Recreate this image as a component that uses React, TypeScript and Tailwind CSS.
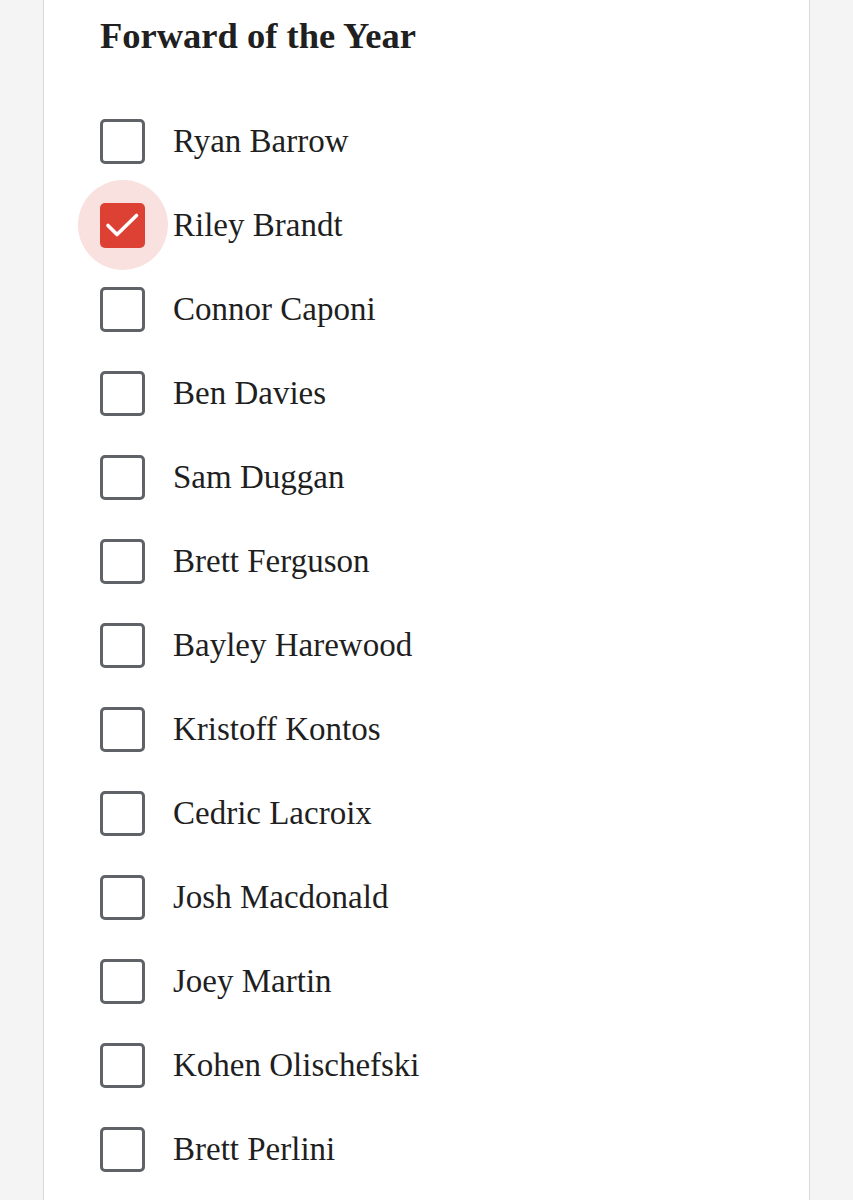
const nominees = [
  { name: "Ryan Barrow", checked: false },
  { name: "Riley Brandt", checked: true },
  { name: "Connor Caponi", checked: false },
  { name: "Ben Davies", checked: false },
  { name: "Sam Duggan", checked: false },
  { name: "Brett Ferguson", checked: false },
  { name: "Bayley Harewood", checked: false },
  { name: "Kristoff Kontos", checked: false },
  { name: "Cedric Lacroix", checked: false },
  { name: "Josh Macdonald", checked: false },
  { name: "Joey Martin", checked: false },
  { name: "Kohen Olischefski", checked: false },
  { name: "Brett Perlini", checked: false },
];

function Box({ checked }: { checked: boolean }) {
  if (!checked) {
    return (
      <span className="relative block h-[45px] w-[45px] shrink-0 rounded-[5px] border-[3px] border-[#5f6368] bg-white" />
    );
  }
  return (
    <span className="relative block h-[45px] w-[45px] shrink-0">
      <span className="absolute left-1/2 top-1/2 h-[90px] w-[90px] -translate-x-1/2 -translate-y-1/2 rounded-full bg-[#f8e1df]" />
      <span className="relative block h-[45px] w-[45px] rounded-[5px] bg-[#dd4134]">
        <svg width="45" height="45" viewBox="0 0 45 45" fill="none" className="block">
          <path
            d="M8 22.5l9 9L36.5 12.5"
            stroke="white"
            strokeWidth="3.6"
            strokeLinecap="round"
            strokeLinejoin="round"
          />
        </svg>
      </span>
    </span>
  );
}

export default function App() {
  return (
    <div className="flex min-h-[1200px] bg-[#f4f4f4] font-['Liberation_Serif',serif] text-[#1f1f1f]">
      <div className="ml-[43px] w-[767px] border-x border-[#dadada] bg-white pl-[56px] pt-[16px]">
        <h2 className="text-[36.5px] font-bold leading-[40px] text-[#202020]">Forward of the Year</h2>
        <ul className="mt-[43px]">
          {nominees.map((n) => (
            <li key={n.name} className="flex h-[84px] items-center gap-[28px]">
              <Box checked={n.checked} />
              <span className="text-[33px] leading-none">{n.name}</span>
            </li>
          ))}
        </ul>
      </div>
    </div>
  );
}
